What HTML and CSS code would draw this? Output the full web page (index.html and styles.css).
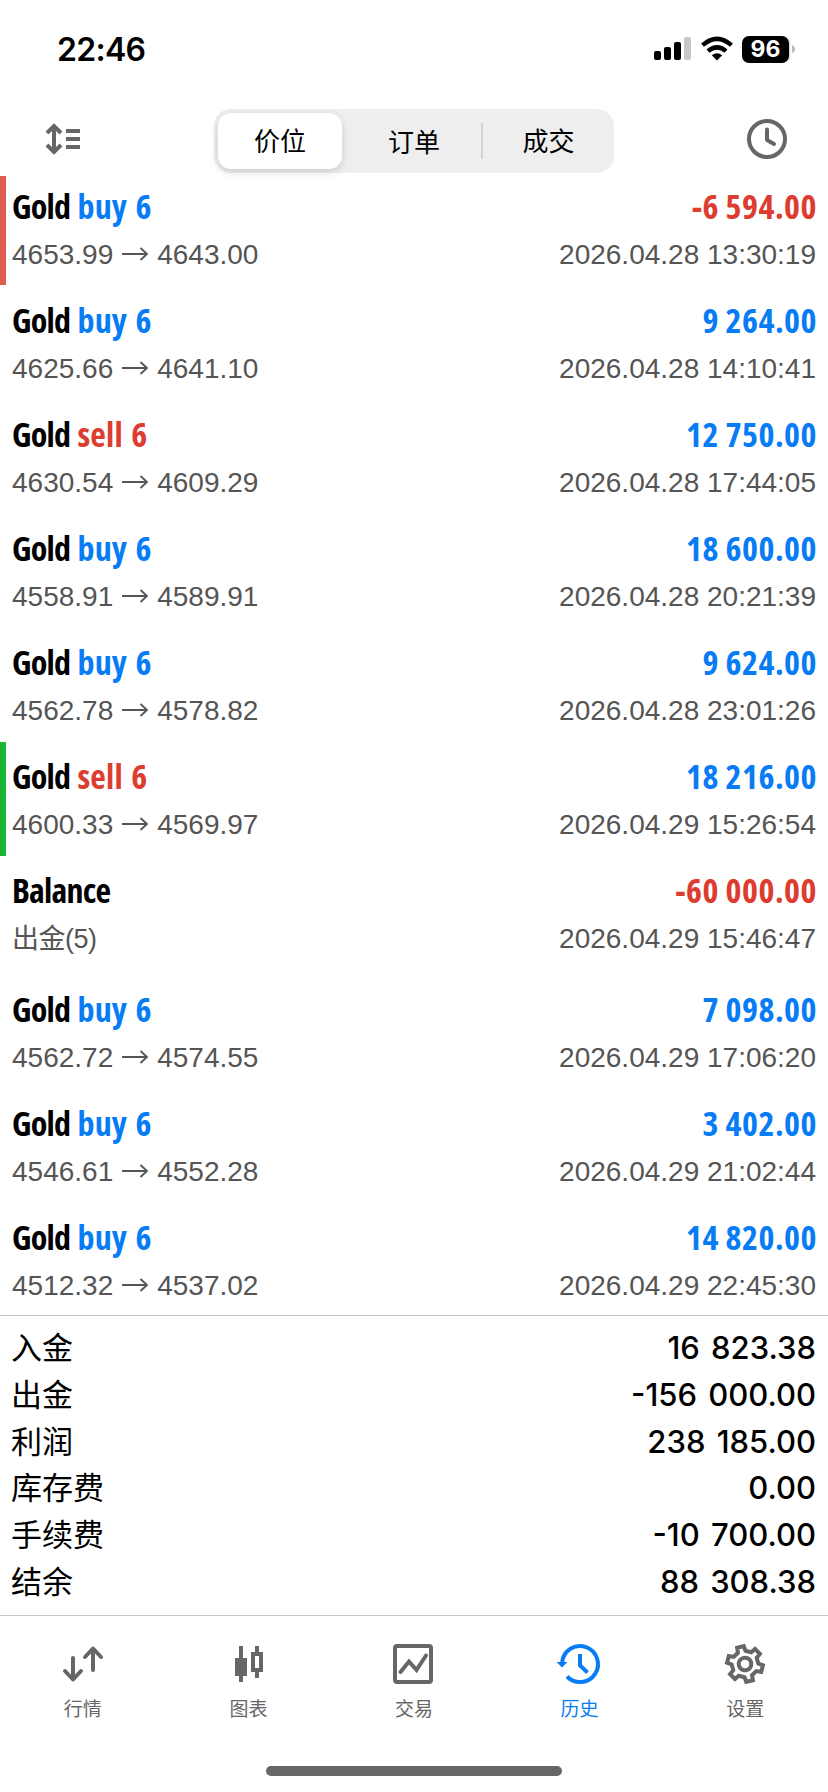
FILE: index.html
```html
<!DOCTYPE html>
<html lang="zh-CN">
<head>
  <meta charset="UTF-8">
  <meta name="viewport" content="width=device-width, initial-scale=1.0">
  <title>历史</title>
  <link rel="stylesheet" href="styles.css">
</head>
<body>
  <div class="status">
    <span class="time">22:46</span>
    <div class="status-icons">
      <svg width="38" height="24" viewBox="0 0 38 24">
        <rect x="0" y="14" width="7" height="9" rx="2"/>
        <rect x="10" y="10" width="7" height="13" rx="2"/>
        <rect x="20" y="5" width="7" height="18" rx="2"/>
        <rect x="30" y="0" width="7" height="23" rx="2" fill="#c8c8c8"/>
      </svg>
      <svg class="wifi" width="32" height="24" viewBox="0 0 32 24">
        <path d="M1.500 8.200Q16-4.500 30.500 8.200M7 14.200Q16 6.500 25 14.200" fill="none" stroke="#000" stroke-width="4.400"/>
        <path d="M10.800 18.300Q16 14 21.200 18.300L16 23.500z"/>
      </svg>
      <span class="battery">96</span>
      <svg class="battery-cap" width="6" height="26" viewBox="0 0 6 26">
        <path d="M0 2Q1.500 4 1.500 7V19Q1.500 22 0 24z" fill="#ddd"/>
        <path d="M3 9Q6 10 6 13T3 17z" fill="#bbb"/>
      </svg>
    </div>
  </div>

  <div class="nav">
    <svg class="sort" width="36" height="32" viewBox="0 0 36 32" fill="none" stroke="#666" stroke-width="4">
      <path d="M9 3V29M2 10L9 3L16 10M2 22L9 29L16 22M21 8H35M21 16H35M21 24H35"/>
    </svg>
    <div class="segment">
      <span class="seg active">价位</span>
      <span class="seg">订单</span>
      <span class="seg last">成交</span>
    </div>
    <svg class="clock" width="40" height="40" viewBox="0 0 40 40" fill="none" stroke="#666" stroke-width="4">
      <circle cx="20" cy="20" r="18"/>
      <path d="M20 10.500V21L27 25" stroke-linecap="round" stroke-linejoin="round"/>
    </svg>
  </div>

  <div class="deals">
    <div class="deal first">
      <div class="line"><b>Gold <i class="buy">buy 6</i></b><b class="sell amount">-6 594.00</b></div>
      <div class="info"><span>4653.99<svg class="arrow" viewBox="0 0 28 14"><path d="M1 7H26M19.500 1L26 7L19.500 13"/></svg>4643.00</span><span>2026.04.28 13:30:19</span></div>
    </div>
    <div class="deal">
      <div class="line"><b>Gold <i class="buy">buy 6</i></b><b class="buy amount">9 264.00</b></div>
      <div class="info"><span>4625.66<svg class="arrow" viewBox="0 0 28 14"><path d="M1 7H26M19.500 1L26 7L19.500 13"/></svg>4641.10</span><span>2026.04.28 14:10:41</span></div>
    </div>
    <div class="deal">
      <div class="line"><b>Gold <i class="sell">sell 6</i></b><b class="buy amount">12 750.00</b></div>
      <div class="info"><span>4630.54<svg class="arrow" viewBox="0 0 28 14"><path d="M1 7H26M19.500 1L26 7L19.500 13"/></svg>4609.29</span><span>2026.04.28 17:44:05</span></div>
    </div>
    <div class="deal">
      <div class="line"><b>Gold <i class="buy">buy 6</i></b><b class="buy amount">18 600.00</b></div>
      <div class="info"><span>4558.91<svg class="arrow" viewBox="0 0 28 14"><path d="M1 7H26M19.500 1L26 7L19.500 13"/></svg>4589.91</span><span>2026.04.28 20:21:39</span></div>
    </div>
    <div class="deal">
      <div class="line"><b>Gold <i class="buy">buy 6</i></b><b class="buy amount">9 624.00</b></div>
      <div class="info"><span>4562.78<svg class="arrow" viewBox="0 0 28 14"><path d="M1 7H26M19.500 1L26 7L19.500 13"/></svg>4578.82</span><span>2026.04.28 23:01:26</span></div>
    </div>
    <div class="deal tp">
      <div class="line"><b>Gold <i class="sell">sell 6</i></b><b class="buy amount">18 216.00</b></div>
      <div class="info"><span>4600.33<svg class="arrow" viewBox="0 0 28 14"><path d="M1 7H26M19.500 1L26 7L19.500 13"/></svg>4569.97</span><span>2026.04.29 15:26:54</span></div>
    </div>
    <div class="deal balance">
      <div class="line"><b>Balance</b><b class="sell amount">-60 000.00</b></div>
      <div class="info"><span class="comment">出金(5)</span><span>2026.04.29 15:46:47</span></div>
    </div>
    <div class="deal">
      <div class="line"><b>Gold <i class="buy">buy 6</i></b><b class="buy amount">7 098.00</b></div>
      <div class="info"><span>4562.72<svg class="arrow" viewBox="0 0 28 14"><path d="M1 7H26M19.500 1L26 7L19.500 13"/></svg>4574.55</span><span>2026.04.29 17:06:20</span></div>
    </div>
    <div class="deal">
      <div class="line"><b>Gold <i class="buy">buy 6</i></b><b class="buy amount">3 402.00</b></div>
      <div class="info"><span>4546.61<svg class="arrow" viewBox="0 0 28 14"><path d="M1 7H26M19.500 1L26 7L19.500 13"/></svg>4552.28</span><span>2026.04.29 21:02:44</span></div>
    </div>
    <div class="deal">
      <div class="line"><b>Gold <i class="buy">buy 6</i></b><b class="buy amount">14 820.00</b></div>
      <div class="info"><span>4512.32<svg class="arrow" viewBox="0 0 28 14"><path d="M1 7H26M19.500 1L26 7L19.500 13"/></svg>4537.02</span><span>2026.04.29 22:45:30</span></div>
    </div>
  </div>

  <div class="summary">
    <div class="sum"><span>入金</span><span class="num">16 823.38</span></div>
    <div class="sum"><span>出金</span><span class="num">-156 000.00</span></div>
    <div class="sum"><span>利润</span><span class="num">238 185.00</span></div>
    <div class="sum"><span>库存费</span><span class="num">0.00</span></div>
    <div class="sum"><span>手续费</span><span class="num">-10 700.00</span></div>
    <div class="sum"><span>结余</span><span class="num">88 308.38</span></div>
  </div>

  <div class="tabs">
    <div class="tab">
      <svg width="44" height="44" viewBox="0 0 44 44" fill="none" stroke="currentColor" stroke-width="4" stroke-linecap="round" stroke-linejoin="round">
        <path d="M12 16V37M4 29L12 37.500L20 29M32 28V7M24 15L32 6.500L40 15"/>
      </svg>
      <span>行情</span>
    </div>
    <div class="tab">
      <svg width="44" height="44" viewBox="0 0 44 44" fill="currentColor">
        <path d="M13 4h4v12h4v18h-4v6h-4v-6H9V16h4z"/>
        <path d="M29 4h4v6h4v20h-4v6h-4v-6h-4V10h4zM29 14v12h4V14z" fill-rule="evenodd"/>
      </svg>
      <span>图表</span>
    </div>
    <div class="tab">
      <svg width="44" height="44" viewBox="0 0 44 44" fill="none" stroke="currentColor" stroke-width="4">
        <rect x="3" y="4" width="36" height="36" rx="2"/>
        <path d="M8.500 30L17 19.500L24.500 28L34 13.500" stroke-linecap="round"/>
      </svg>
      <span>交易</span>
    </div>
    <div class="tab current">
      <svg width="44" height="44" viewBox="0 0 44 44" fill="none" stroke="currentColor" stroke-width="4">
        <path d="M4.100 20A18 18 0 1 1 9 34.500M22 12V23.500L29.500 30.500"/>
        <path d="M-1.500 20H9.500L4 25.500z" fill="currentColor" stroke="none"/>
      </svg>
      <span>历史</span>
    </div>
    <div class="tab">
      <svg class="gear" width="44" height="44" viewBox="0 0 44 44" fill="none" stroke="currentColor" stroke-width="4">
        <circle cx="22" cy="22" r="6.300"/>
        <path d="M18.110 9.300L18.570 4.330H25.430L25.890 9.300L31.070 12.280L35.580 10.190L39.020 16.140L34.960 19.010V24.990L39.020 27.860L35.580 33.810L31.070 31.720L25.890 34.700L25.430 39.670H18.570L18.110 34.700L12.930 31.720L8.420 33.810L4.980 27.860L9.040 24.990V19.010L4.980 16.140L8.420 10.190L12.930 12.280Z"/>
      </svg>
      <span>设置</span>
    </div>
  </div>
  <div class="home"></div>
</body>
</html>
```
FILE: styles.css
```css
* {
  box-sizing: border-box;
}
body {
  margin: 0;
  width: 828px;
  height: 1792px;
  background: #fff;
  color: #000;
  font-family: "Liberation Sans", "Noto Sans CJK SC", sans-serif;
  overflow: hidden;
}
svg {
  display: block;
  flex: none;
  overflow: visible;
}
.status {
  height: 98px;
  padding: 0 33px 0 57px;
  display: flex;
  justify-content: space-between;
}
.time {
  font: 600 32px/98px Inter, sans-serif;
  letter-spacing: -0.7px;
  padding-top: 1px;
}
.status-icons {
  display: flex;
  align-items: center;
}
.wifi {
  margin: 0 9px;
}
.battery {
  width: 47px;
  height: 27px;
  border-radius: 7px;
  background: #000;
  color: #fff;
  font: 700 23px/27px Inter, sans-serif;
  text-align: center;
}
.nav {
  height: 78px;
  padding: 0 41px 0 45px;
  display: flex;
  justify-content: space-between;
  align-items: flex-start;
}
.sort {
  margin-top: 25px;
}
.clock {
  margin-top: 21px;
}
.segment {
  margin: 11px 0 0;
  width: 400px;
  height: 64px;
  padding: 4px;
  border-radius: 17px;
  background: #eee;
  display: flex;
  align-items: center;
}
.seg {
  width: 134px;
  text-align: center;
  font: 26px/54px "Noto Sans CJK SC", sans-serif;
}
.seg.active {
  width: 124px;
  height: 56px;
  margin-right: 5px;
  border-radius: 13px;
  background: #fff;
  box-shadow: 0 3px 8px rgba(0, 0, 0, 0.14);
}
.seg.last {
  flex: 1;
  height: 36px;
  line-height: 34px;
  padding-left: 4px;
  border-left: 2px solid #d4d4d4;
}
.deals {
  height: 1139px;
  overflow: hidden;
}
.deal {
  height: 114px;
  padding: 12px 12px 0 6px;
  border-left: 6px solid transparent;
}
.deal.first {
  height: 110px;
  padding-top: 8px;
  border-image: linear-gradient(#e05c50 108px, transparent 108px) 1;
  border-width: 0 0 0 6px;
  border-style: solid;
}
.deal.tp {
  border-left-color: #19b735;
}
.deal.balance {
  height: 119px;
}
.line {
  height: 48px;
  line-height: 45px;
  display: flex;
  justify-content: space-between;
  font-family: "Open Sans", sans-serif;
  font-stretch: 75%;
  font-size: 34px;
  white-space: nowrap;
}
.line b {
  font-weight: 700;
  letter-spacing: -0.8px;
  word-spacing: 2px;
}
.line i {
  font-style: normal;
  letter-spacing: 0.2px;
}
.line .amount {
  letter-spacing: 0.5px;
  word-spacing: 0;
  margin-right: -1px;
}
.buy {
  color: #087cf4;
}
.sell {
  color: #dd3d30;
}
.info {
  height: 46px;
  line-height: 46px;
  display: flex;
  justify-content: space-between;
  color: #555;
  font-size: 28px;
}
.arrow {
  display: inline-block;
  width: 28px;
  height: 14px;
  margin: 0 8px 3px 8px;
  fill: none;
  stroke: #555;
  stroke-width: 1.8;
}
.comment {
  font-size: 27px;
  letter-spacing: -0.5px;
}
.summary {
  height: 300px;
  padding: 9px 12px 0 11px;
  border-top: 1px solid #c6c6c6;
}
.sum {
  height: 46.8px;
  line-height: 42px;
  display: flex;
  justify-content: space-between;
  font-family: "Noto Sans CJK SC", sans-serif;
  font-size: 31px;
}
.num {
  font-family: Inter, sans-serif;
  font-weight: 500;
  word-spacing: 3px;
  line-height: 46px;
}
.tabs {
  height: 151px;
  border-top: 1px solid #c6c6c6;
  padding-top: 26px;
  display: flex;
  color: #666;
}
.tab {
  flex: 1;
  display: flex;
  flex-direction: column;
  align-items: center;
  font: 19px/28px "Noto Sans CJK SC", sans-serif;
}
.tab span {
  margin-top: 8px;
}
.current {
  color: #087cf4;
}
.gear {
  transform: rotate(-15deg);
}
.home {
  width: 296px;
  height: 10px;
  margin: 0 auto;
  border-radius: 5px;
  background: #666;
}
```
